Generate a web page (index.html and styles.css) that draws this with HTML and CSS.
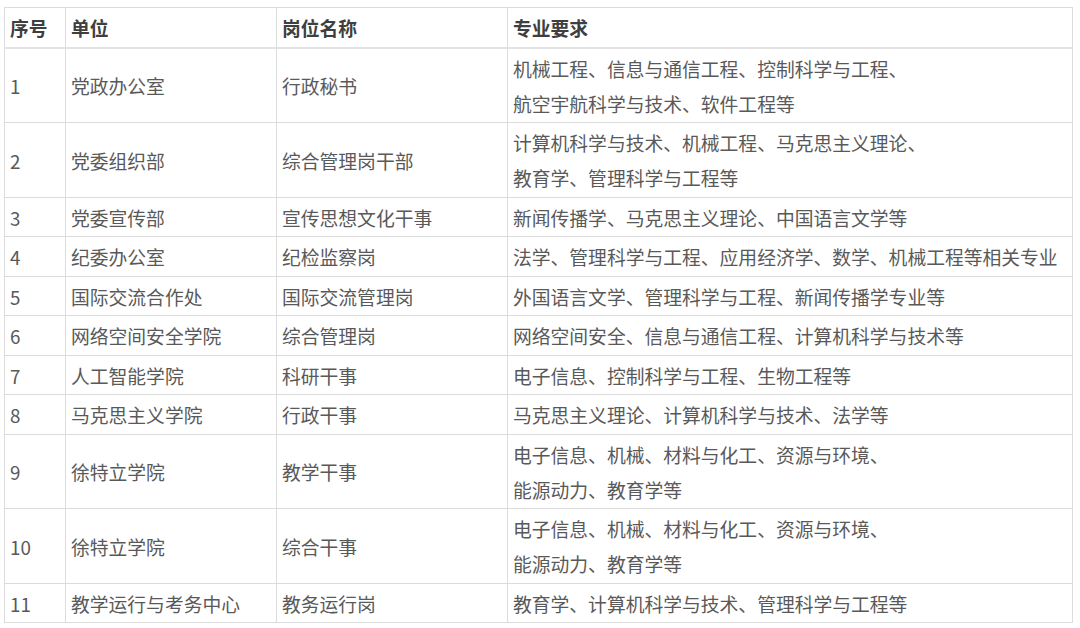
FILE: index.html
```html
<!DOCTYPE html>
<html lang="zh-CN">
<head>
<meta charset="utf-8">
<title>岗位表</title>
<link rel="stylesheet" href="styles.css">
</head>
<body>
<table class="jobs">
  <colgroup>
    <col class="c-no">
    <col class="c-unit">
    <col class="c-post">
    <col class="c-req">
  </colgroup>
  <thead>
    <tr><th>序号</th><th>单位</th><th>岗位名称</th><th>专业要求</th></tr>
  </thead>
  <tbody>
    <tr><td>1</td><td>党政办公室</td><td>行政秘书</td><td>机械工程、信息与通信工程、控制科学与工程、<br>航空宇航科学与技术、软件工程等</td></tr>
    <tr><td>2</td><td>党委组织部</td><td>综合管理岗干部</td><td>计算机科学与技术、机械工程、马克思主义理论、<br>教育学、管理科学与工程等</td></tr>
    <tr><td>3</td><td>党委宣传部</td><td>宣传思想文化干事</td><td>新闻传播学、马克思主义理论、中国语言文学等</td></tr>
    <tr><td>4</td><td>纪委办公室</td><td>纪检监察岗</td><td>法学、管理科学与工程、应用经济学、数学、机械工程等相关专业</td></tr>
    <tr><td>5</td><td>国际交流合作处</td><td>国际交流管理岗</td><td>外国语言文学、管理科学与工程、新闻传播学专业等</td></tr>
    <tr><td>6</td><td>网络空间安全学院</td><td>综合管理岗</td><td>网络空间安全、信息与通信工程、计算机科学与技术等</td></tr>
    <tr><td>7</td><td>人工智能学院</td><td>科研干事</td><td>电子信息、控制科学与工程、生物工程等</td></tr>
    <tr><td>8</td><td>马克思主义学院</td><td>行政干事</td><td>马克思主义理论、计算机科学与技术、法学等</td></tr>
    <tr><td>9</td><td>徐特立学院</td><td>教学干事</td><td>电子信息、机械、材料与化工、资源与环境、<br>能源动力、教育学等</td></tr>
    <tr><td>10</td><td>徐特立学院</td><td>综合干事</td><td>电子信息、机械、材料与化工、资源与环境、<br>能源动力、教育学等</td></tr>
    <tr><td>11</td><td>教学运行与考务中心</td><td>教务运行岗</td><td>教育学、计算机科学与技术、管理科学与工程等</td></tr>
  </tbody>
</table>
</body>
</html>
```
FILE: styles.css
```css
html, body {
  margin: 0;
  padding: 0;
  background: #ffffff;
}
body {
  padding: 7px 0 0 4px;
  font-family: "Noto Sans CJK SC", "Noto Sans", sans-serif;
}
.jobs {
  border-collapse: collapse;
  table-layout: fixed;
  width: 1068px;
  font-size: 18.8px;
  line-height: 35px;
  color: #595959;
}
.c-no { width: 61px; }
.c-unit { width: 211px; }
.c-post { width: 231px; }
.c-req { width: 565px; }
.jobs th,
.jobs td {
  border: 1px solid #dcdcdc;
  padding: 2px 5px 1.5px 5px;
  text-align: left;
  vertical-align: middle;
  white-space: nowrap;
}
.jobs th {
  font-weight: bold;
  color: #3f3f3f;
  border-bottom: 2px solid #e2e2e2;
}
```
